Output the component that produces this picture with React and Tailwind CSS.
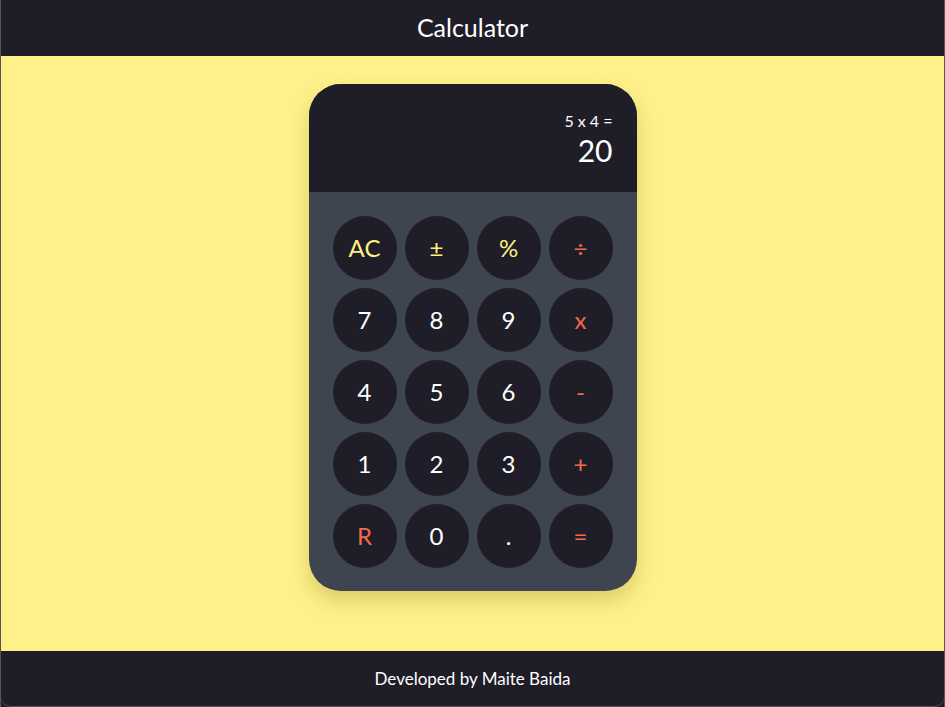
import React from 'react';

const keys = [
    { label: 'AC', tone: 'yellow' },
    { label: '±', tone: 'yellow' },
    { label: '%', tone: 'yellow' },
    { label: '÷', tone: 'orange' },
    { label: '7' },
    { label: '8' },
    { label: '9' },
    { label: 'x', tone: 'orange' },
    { label: '4' },
    { label: '5' },
    { label: '6' },
    { label: '-', tone: 'orange' },
    { label: '1' },
    { label: '2' },
    { label: '3' },
    { label: '+', tone: 'orange' },
    { label: 'R', tone: 'orange' },
    { label: '0' },
    { label: '.' },
    { label: '=', tone: 'orange' },
];

const toneClasses = {
    yellow: 'text-[#fdf07f]',
    orange: 'text-[#f26a4b]',
    white: 'text-white',
};

const Key = ({ label, tone = 'white' }) => (
    <button
        className={`w-16 h-16 rounded-full bg-[#1f1e28] flex items-center justify-center text-2xl ${toneClasses[tone]}`}
    >
        {label}
    </button>
);

const App = () => {
    return (
        <div
            className="h-[707px] w-full flex flex-col border-x border-[#55555c] bg-[#1f1e28]"
            style={{ fontFamily: 'Lato, "Noto Sans", sans-serif' }}
        >
            {/* Header */}
            <header className="h-14 shrink-0 bg-[#1f1e28] flex items-center justify-center">
                <h1 className="text-[25px] text-white">Calculator</h1>
            </header>

            {/* Main */}
            <main className="flex-1 bg-[#fef18a] flex justify-center pt-7">
                <div className="w-[328px] h-[507px] rounded-[32px] overflow-hidden bg-[#3e4450] shadow-[0_10px_20px_rgba(120,100,0,0.25)] flex flex-col">
                    <div className="h-[108px] shrink-0 bg-[#1f1e28] flex flex-col items-end justify-start px-6 pt-[27px]">
                        <span className="text-base leading-[20px] text-white">5 x 4 =</span>
                        <span className="text-[30px] leading-[38px] text-white">20</span>
                    </div>
                    <div className="grid grid-cols-4 gap-2 p-6">
                        {keys.map((k, i) => (
                            <Key key={i} {...k} />
                        ))}
                    </div>
                </div>
            </main>

            {/* Footer */}
            <footer className="h-14 shrink-0 bg-[#1f1e28] flex items-center justify-center rounded-b-[10px] border-b border-[#55555c]">
                <p className="text-[17px] text-white">Developed by Maite Baida</p>
            </footer>
        </div>
    );
};

export default App;
